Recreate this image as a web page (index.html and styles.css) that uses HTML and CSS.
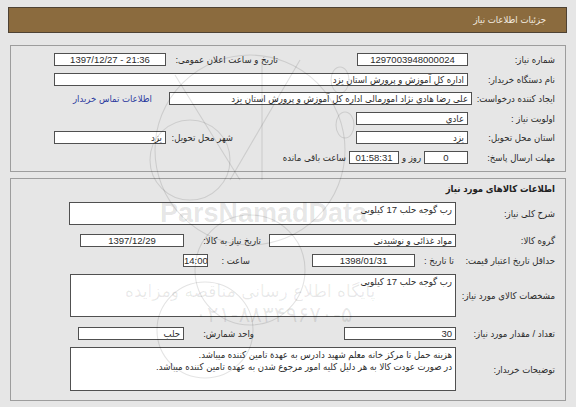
FILE: index.html
```html
<!DOCTYPE html>
<html lang="fa" dir="rtl">
<head>
<meta charset="utf-8">
<title>جزئیات اطلاعات نیاز</title>
<link rel="stylesheet" href="styles.css">
</head>
<body>
<div class="page">
  <div class="header">جزئیات اطلاعات نیاز</div>

  <div class="panel p1">
    <div class="row">
      <div class="lbl">شماره نیاز:</div>
      <div class="box c ltr w111">1297003948000024</div>
      <div class="lbl2 r1l">تاریخ و ساعت اعلان عمومی:</div>
      <div class="box c ltr w112">1397/12/27 - 21:36</div>
    </div>
    <div class="row">
      <div class="lbl">نام دستگاه خریدار:</div>
      <div class="box w414">اداره کل آموزش و پرورش استان یزد</div>
    </div>
    <div class="row">
      <div class="lbl lw93">ایجاد کننده درخواست:</div>
      <div class="box w303">علی رضا هادی نژاد امورمالی اداره کل آموزش و پرورش استان یزد</div>
      <a class="link" href="#">اطلاعات تماس خریدار</a>
    </div>
    <div class="row">
      <div class="lbl">اولویت نیاز :</div>
      <div class="box w112">عادی</div>
    </div>
    <div class="row">
      <div class="lbl">استان محل تحویل:</div>
      <div class="box w112">یزد</div>
      <div class="lbl2 r5l">شهر محل تحویل:</div>
      <div class="box w112">یزد</div>
    </div>
    <div class="row">
      <div class="lbl">مهلت ارسال پاسخ:</div>
      <div class="box c ltr w44">0</div>
      <div class="txt day">روز و</div>
      <div class="box c ltr w50">01:58:31</div>
      <div class="txt remain">ساعت باقی مانده</div>
    </div>
  </div>

  <div class="panel p2">
    <div class="title">اطلاعات کالاهای مورد نیاز</div>
    <div class="row ra">
      <div class="lbl lw109">شرح کلی نیاز:</div>
      <div class="box tall w387 h23">رب گوجه حلب 17 کیلویی</div>
    </div>
    <div class="row rb">
      <div class="lbl lw109">گروه کالا:</div>
      <div class="box w187">مواد غذائی و نوشیدنی</div>
      <div class="lbl2 rbl">تاریخ نیاز به کالا:</div>
      <div class="box c ltr w104">1397/12/29</div>
    </div>
    <div class="row rc">
      <div class="lbl lw109">حداقل تاریخ اعتبار قیمت:</div>
      <div class="txt until">تا تاریخ :</div>
      <div class="box c ltr w103">1398/01/31</div>
      <div class="txt hour">ساعت :</div>
      <div class="box c ltr w25">14:00</div>
    </div>
    <div class="row rd">
      <div class="lbl lw109">مشخصات کالای مورد نیاز:</div>
      <div class="box tall w386 h43">رب گوجه حلب 17 کیلویی</div>
    </div>
    <div class="row re">
      <div class="lbl lw109">تعداد / مقدار مورد نیاز:</div>
      <div class="box w112">30</div>
      <div class="lbl2 rel">واحد شمارش:</div>
      <div class="box w106">حلب</div>
    </div>
    <div class="row rf">
      <div class="lbl lw109">توضیحات خریدار:</div>
      <div class="box tall w386 h44">هزینه حمل تا مرکز خانه معلم شهید دادرس به عهدة تامین کننده میباشد.<br>در صورت عودت کالا به هر دلیل کلیه امور مرجوع شدن به عهده تامین کننده میباشد.</div>
    </div>
  </div>

  <div class="watermark" aria-hidden="true">
    <svg class="wm-logo" width="576" height="407" viewBox="0 0 576 407">
      <g fill="none" stroke="#000" stroke-opacity="0.11" stroke-width="1.1">
        <circle cx="250" cy="150" r="95"/>
        <circle cx="250" cy="270" r="55"/>
        <circle cx="190" cy="160" r="40"/>
        <circle cx="205" cy="330" r="48"/>
        <line x1="262" y1="62" x2="262" y2="180"/>
        <line x1="300" y1="60" x2="230" y2="180"/>
        <line x1="175" y1="75" x2="240" y2="180"/>
        <ellipse cx="340" cy="80" rx="9" ry="13"/>
        <ellipse cx="345" cy="125" rx="9" ry="13"/>
      </g>
    </svg>
    <div class="wm-brand">ParsNamadData</div>
    <div class="wm-line2">پایگاه اطلاع رسانی مناقصه ومزایده</div>
    <div class="wm-phone">۰۲۱-۸۸۳۴۹۶۷۰-۵</div>
  </div>
</div>
</body>
</html>
```

FILE: styles.css
```css
html, body {
  margin: 0;
  padding: 0;
  background: #e6e6e6;
}
.page {
  position: relative;
  width: 576px;
  height: 407px;
  overflow: hidden;
  direction: rtl;
  font-family: "Liberation Sans", "DejaVu Sans Condensed", "DejaVu Sans", sans-serif;
  font-size: 9.5px;
  color: #2b2b2b;
  padding-top: 7px;
  box-sizing: border-box;
}
.header {
  margin: 0 9px 0 8px;
  height: 26px;
  box-sizing: border-box;
  background: #8b6b3e;
  border: 1px solid #4e4234;
  color: #f3ece0;
  line-height: 24px;
  padding-right: 20px;
}
.panel {
  margin: 0 10px 0 10px;
  border: 1px solid #9d9d9d;
  background: #e6e6e6;
  box-sizing: border-box;
}
.p1 {
  margin-top: 12px;
  padding: 7px 0 7.5px;
}
.p2 {
  margin-top: 6px;
  padding: 3px 0 9px;
}
.row {
  display: flex;
  align-items: center;
  height: 13px;
}
.p1 .row + .row {
  margin-top: 6.5px;
}
.lbl {
  width: 97px;
  flex: none;
  box-sizing: border-box;
  padding-right: 10px;
  white-space: nowrap;
}
.lw93 { width: 93px; }
.lw109 { width: 109px; }
.lbl2, .txt {
  flex: none;
  white-space: nowrap;
}
.box {
  flex: none;
  height: 13px;
  box-sizing: border-box;
  border: 1px solid #505050;
  background: #fff;
  line-height: 11px;
  padding: 0 3px;
  white-space: nowrap;
  overflow: hidden;
  text-align: right;
}
.box.c { text-align: center; }
.box.ltr { direction: ltr; }
.box.tall {
  white-space: normal;
  line-height: 12px;
  padding-top: 1px;
}
.w25 { width: 25px; padding: 0; }
.w44 { width: 44px; }
.w50 { width: 50px; padding: 0; }
.w103 { width: 103px; }
.w104 { width: 104px; }
.w106 { width: 106px; }
.w111 { width: 111px; }
.w112 { width: 112px; }
.w187 { width: 187px; }
.w303 { width: 303px; }
.w386 { width: 386px; }
.w387 { width: 387px; }
.w414 { width: 414px; }
.h23 { height: 23px; }
.h43 { height: 43px; }
.h44 { height: 44px; }

.r1l { width: 112px; margin-right: 79px; }
.r5l { width: 67px; margin-right: 123px; }
.day { width: 25px; text-align: center; }
.remain { margin-right: 3px; }
.link {
  margin-right: 17px;
  color: #2c3a9e;
  text-decoration: none;
}
.title {
  height: 14px;
  line-height: 14px;
  padding-right: 10px;
  font-weight: bold;
  color: #222;
}
.ra { margin-top: 6px; height: 23px; }
.rb { margin-top: 9px; }
.rbl { width: 77px; margin-right: 8px; }
.rc { margin-top: 7px; }
.until { width: 33px; margin-right: 2px; margin-left: 6px; }
.hour { width: 30px; margin-right: 62px; margin-left: 12px; }
.rd { margin-top: 7px; height: 43px; }
.re { margin-top: 10px; }
.rel { width: 70px; margin-right: 90px; }
.rf { margin-top: 7px; height: 44px; }

.watermark {
  position: absolute;
  inset: 0;
  pointer-events: none;
}
.wm-logo {
  position: absolute;
  left: 0;
  top: 0;
}
.wm-brand {
  position: absolute;
  left: 160px;
  top: 200px;
  direction: ltr;
  font-family: "Liberation Sans", sans-serif;
  font-weight: bold;
  font-size: 27px;
  line-height: 26px;
  color: rgba(0, 0, 0, 0.11);
}
.wm-line2 {
  position: absolute;
  left: 125px;
  top: 281px;
  font-family: "DejaVu Sans", sans-serif;
  font-size: 17px;
  line-height: 20px;
  color: rgba(0, 0, 0, 0.09);
}
.wm-phone {
  position: absolute;
  left: 195px;
  top: 302px;
  direction: ltr;
  font-family: "DejaVu Sans", sans-serif;
  font-size: 22px;
  line-height: 25px;
  color: rgba(0, 0, 0, 0.09);
}
```
